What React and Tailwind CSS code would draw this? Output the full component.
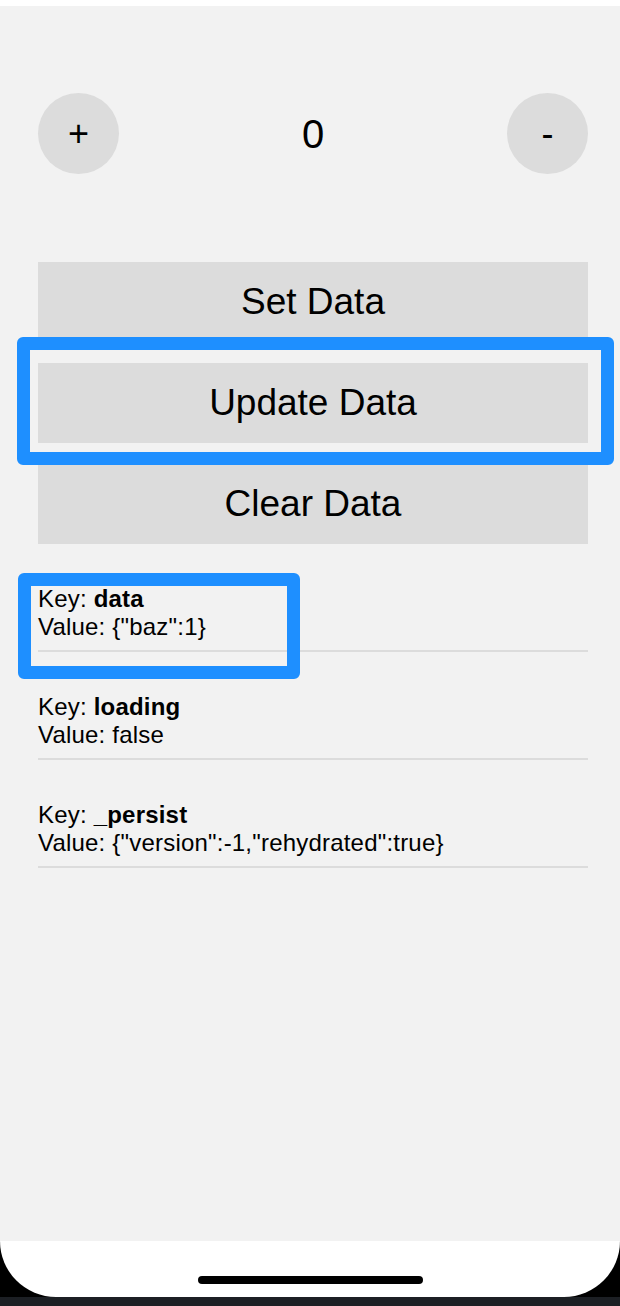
import React from 'react';

const rows = [
  { key: 'data', value: '{"baz":1}', marked: true },
  { key: 'loading', value: 'false' },
  { key: '_persist', value: '{"version":-1,"rehydrated":true}' },
];

function Highlight({ className }) {
  return (
    <div
      className={`absolute border-[13px] border-[#1e8fff] rounded-[6px] pointer-events-none ${className}`}
    />
  );
}

export default function App() {
  return (
    <div
      className="w-[620px] h-[1306px] bg-[#1c1f24] overflow-hidden text-black"
      style={{ fontFamily: '"Liberation Sans", Arial, sans-serif' }}
    >
      <div className="h-[6px] bg-white" />

      <div className="h-[1235px] bg-[#f2f2f2] pl-[38px] pr-[32px] pt-[87px]">
        {/* counter */}
        <div className="flex items-center justify-between">
          <button className="w-[81px] h-[81px] rounded-full bg-[#dcdcdc] flex items-center justify-center text-[36px] leading-none">
            +
          </button>
          <span className="text-[40px] leading-none">0</span>
          <button className="w-[81px] h-[81px] rounded-full bg-[#dcdcdc] flex items-center justify-center text-[36px] leading-none">
            -
          </button>
        </div>

        {/* actions */}
        <div className="mt-[88px] flex flex-col gap-[21px]">
          <button className="h-[80px] bg-[#dcdcdc] flex items-center justify-center text-[37px]">
            Set Data
          </button>
          <div className="relative">
            <button className="w-full h-[80px] bg-[#dcdcdc] flex items-center justify-center text-[37px]">
              Update Data
            </button>
            <Highlight className="left-[-21px] right-[-26px] top-[-26px] bottom-[-22px]" />
          </div>
          <button className="h-[80px] bg-[#dcdcdc] flex items-center justify-center text-[37px]">
            Clear Data
          </button>
        </div>

        {/* store contents */}
        <div>
          {rows.map((row) => (
            <div
              key={row.key}
              className="relative pt-[41px] pb-[9px] border-b-2 border-[#dcdcdc] text-[24px] leading-[28px] tracking-[0.2px]"
            >
              <div>
                Key: <span className="font-bold">{row.key}</span>
              </div>
              <div>Value: {row.value}</div>
              {row.marked && <Highlight className="left-[-20px] top-[29px] w-[282px] h-[106px]" />}
            </div>
          ))}
        </div>
      </div>

      {/* home indicator area */}
      <div className="h-[56px] bg-black">
        <div className="h-full bg-white rounded-b-[60px] flex items-end justify-center pb-[13px]">
          <div className="w-[225px] h-[8px] rounded-full bg-black" />
        </div>
      </div>
    </div>
  );
}
